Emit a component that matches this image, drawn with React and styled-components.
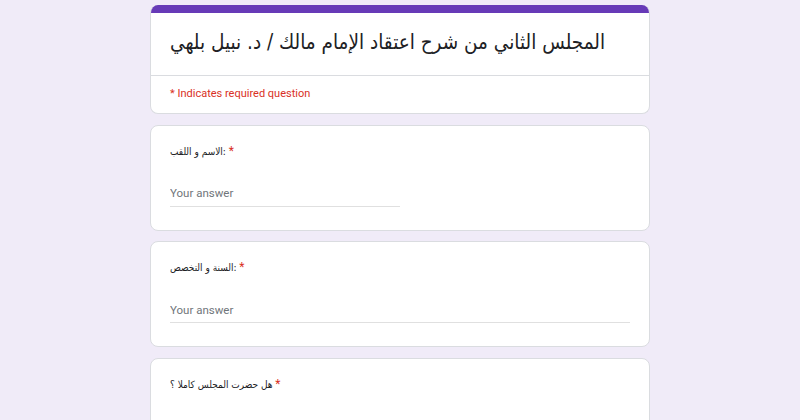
import React from 'react';
import styled, { createGlobalStyle } from 'styled-components';

const GlobalStyle = createGlobalStyle`
  html, body {
    margin: 0;
    padding: 0;
    background: #f0ebf8;
    font-family: Roboto, 'Liberation Sans', 'DejaVu Sans', sans-serif;
  }
`;

const arabicFont = `'DejaVu Sans Condensed', 'DejaVu Sans', sans-serif`;

const Page = styled.div`
  width: 500px;
  margin: 0 auto;
  padding-top: 5px;
  display: flex;
  flex-direction: column;
  gap: 10.5px;
`;

const Card = styled.div`
  background: #fff;
  border: 1px solid #dadce0;
  border-radius: 8px;
  overflow: hidden;
`;

const HeaderCard = styled(Card)`
  border-top: none;
`;

const AccentBar = styled.div`
  height: 8px;
  background: #673ab7;
`;

const TitleBlock = styled.div`
  padding: 12px 19px 16px;
  border-bottom: 1px solid #dadce0;
`;

const Title = styled.h1`
  margin: 0;
  font-family: ${arabicFont};
  font-size: 20.5px;
  font-weight: 400;
  line-height: 34px;
  white-space: nowrap;
  color: #202124;
`;

const RequiredNote = styled.div`
  padding: 10px 19px 11px;
  font-size: 11px;
  line-height: 16px;
  color: #d93025;
`;

const Question = styled(Card)`
  padding: 16px 19px 23px;
`;

const Label = styled.div`
  font-family: ${arabicFont};
  font-size: 10px;
  line-height: 18px;
  color: #202124;
`;

const Star = styled.span`
  color: #d93025;
  font-family: Roboto, sans-serif;
  font-size: 12px;
`;

const AnswerInput = styled.input`
  display: block;
  box-sizing: border-box;
  width: ${(p) => (p.$half ? '50%' : '100%')};
  height: 26px;
  margin-top: 20px;
  padding: 0;
  border: none;
  border-bottom: 1px solid #e0e0e0;
  outline: none;
  background: transparent;
  font-family: Roboto, sans-serif;
  font-size: 11.5px;
  color: #202124;

  &::placeholder {
    color: #70757a;
  }
`;

const Options = styled.div`
  margin-top: 27px;
  display: flex;
  flex-direction: column;
  gap: 12px;
`;

const Option = styled.label`
  display: flex;
  align-items: center;
  gap: 10px;
  font-family: ${arabicFont};
  font-size: 10px;
  color: #202124;
`;

const Radio = styled.span`
  width: 14px;
  height: 14px;
  border: 2px solid #5f6368;
  border-radius: 50%;
  flex-shrink: 0;
`;

const questions = [
  { label: 'الاسم و اللقب: ', half: true },
  { label: 'السنة و التخصص: ', half: false },
];

const App = () => (
  <>
    <GlobalStyle />
    <Page>
      <HeaderCard>
        <AccentBar />
        <TitleBlock>
          <Title>المجلس الثاني من شرح اعتقاد الإمام مالك / د. نبيل بلهي</Title>
        </TitleBlock>
        <RequiredNote>* Indicates required question</RequiredNote>
      </HeaderCard>

      {questions.map((q) => (
        <Question key={q.label}>
          <Label>
            {q.label}
            <Star>*</Star>
          </Label>
          <AnswerInput $half={q.half} placeholder='Your answer' />
        </Question>
      ))}

      <Question>
        <Label>
          هل حضرت المجلس كاملا ؟ <Star>*</Star>
        </Label>
        <Options>
          <Option>
            <Radio />
            نعم كاملا
          </Option>
          <Option>
            <Radio />
            لا
          </Option>
        </Options>
      </Question>
    </Page>
  </>
);

export default App;
